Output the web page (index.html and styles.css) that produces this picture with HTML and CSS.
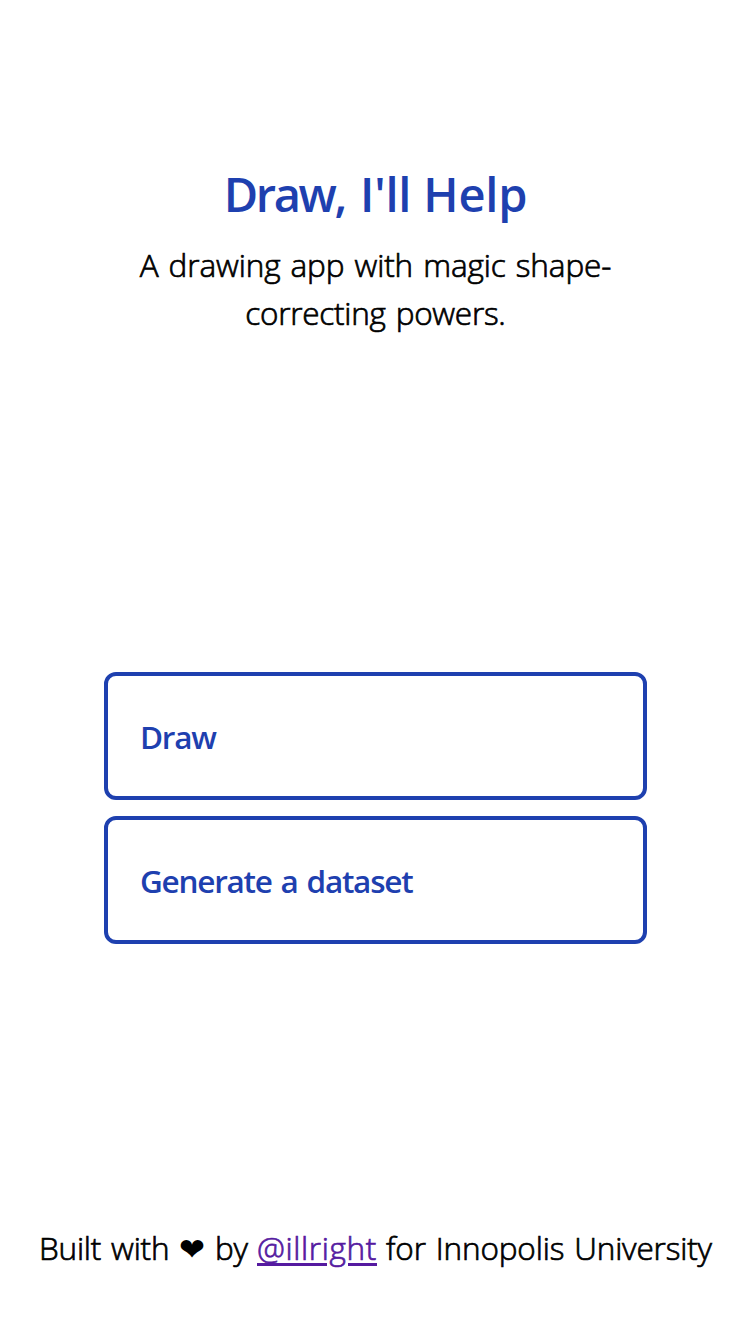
FILE: index.html
```html
<!DOCTYPE html>
<html lang="en">
<head>
<meta charset="utf-8">
<title>Draw, I'll Help</title>
<link rel="stylesheet" href="styles.css">
</head>
<body>
<div class="page">
  <header class="intro">
    <h1 class="title"><span class="title-draw">Draw,</span> <span class="title-help">I'll Help</span></h1>
    <p class="tagline"><span class="line-one">A drawing app with magic shape-</span><br><span class="line-two">correcting powers.</span></p>
  </header>
  <main class="actions">
    <a class="action">Draw</a>
    <a class="action">Generate a dataset</a>
  </main>
  <footer class="credits"><span class="built">Built with</span><span class="heart">&#10084;&#xFE0E;</span><span class="by">by</span><a class="author" href="#">@illright</a><span class="place">for Innopolis University</span></footer>
</div>
</body>
</html>
```
FILE: styles.css
```css
* { box-sizing: border-box; }
body { margin: 0; background: #fff; color: #000; font-family: "Open Sans", "Noto Sans", sans-serif; }
.page { height: 1334px; display: flex; flex-direction: column; }
.intro { height: 504px; padding-top: 158px; text-align: center; }
.title { margin: 0; padding-left: 1px; font-size: 47px; line-height: 72px; font-weight: 600; color: #1e40af; }
.title-draw { letter-spacing: -2.4px; }
.title-help { letter-spacing: -0.2px; margin-left: 3px; }
.tagline { margin: 11px 0 0; padding-left: 1px; font-size: 31.5px; line-height: 48px; font-weight: 300; -webkit-text-stroke: 0.7px currentColor; }
.line-one { letter-spacing: -0.1px; word-spacing: 2px; }
.line-two { letter-spacing: -0.25px; word-spacing: 2px; }
.actions { width: 543px; margin: 168px 0 0 104px; display: flex; flex-direction: column; gap: 16px; }
.action { height: 128px; border: 4px solid #1e40af; border-radius: 12px; padding: 0 32px; display: flex; align-items: center; font-size: 31.5px; font-weight: 600; letter-spacing: -1.25px; word-spacing: 2px; color: #1e40af; }
.credits { margin-top: auto; height: 110px; padding-left: 39px; display: flex; line-height: 48px; font-size: 31.5px; font-weight: 300; letter-spacing: -0.2px; word-spacing: 2px; white-space: nowrap; -webkit-text-stroke: 0.7px currentColor; }
.built { width: 140px; }
.heart { width: 36px; padding-top: 1px; font-family: "DejaVu Sans", sans-serif; font-size: 31px; letter-spacing: 0; -webkit-text-stroke: 0; }
.by { width: 42px; }
.author { margin-right: 9px; letter-spacing: 0.65px; color: #551aa0; text-decoration-thickness: 3px; text-underline-offset: 3px; text-decoration-skip-ink: auto; }
.place { letter-spacing: -0.15px; }
```
